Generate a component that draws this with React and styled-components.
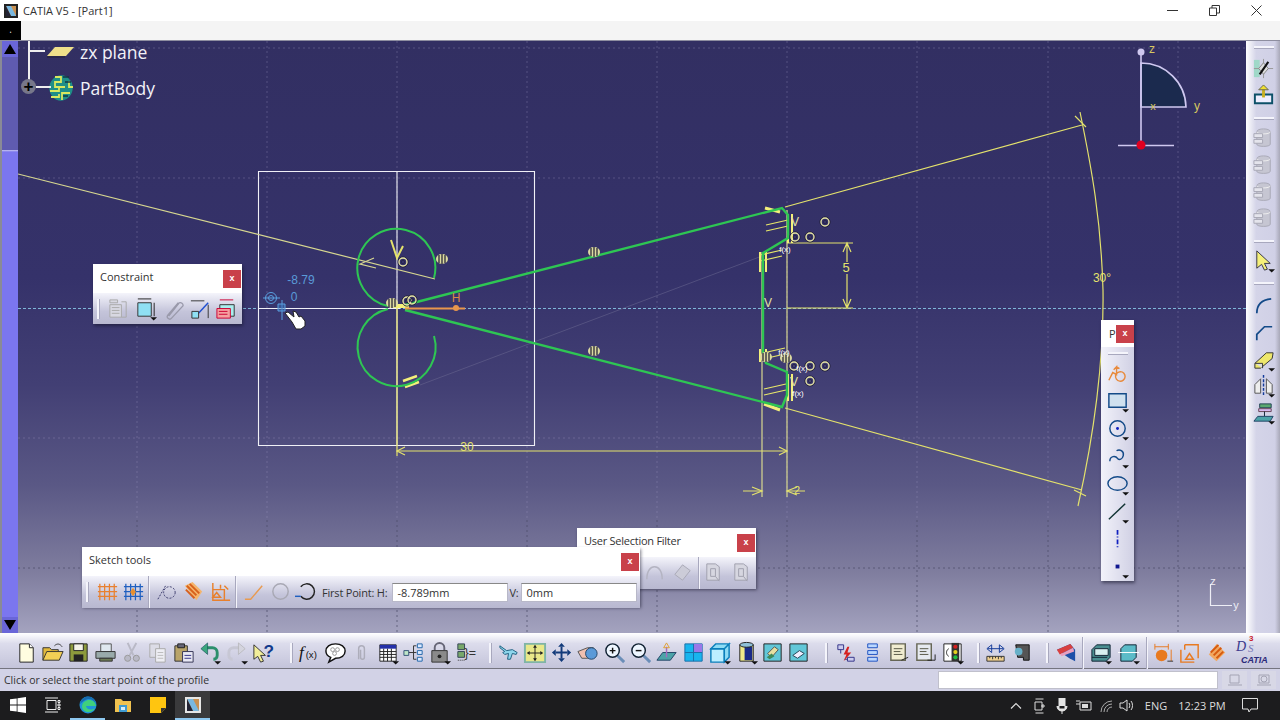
import React from 'react';
import styled, { createGlobalStyle } from 'styled-components';

const GlobalStyle = createGlobalStyle`
    html, body { margin: 0; padding: 0; background: #1c1c1e; }
    body { font-family: 'Open Sans', 'Liberation Sans', sans-serif; overflow: hidden; }
`

const arrow = <path d="M17 21h7l-3.500 3.500z" fill="#111" />

// 24x24 drawings for the toolbar buttons
const icons = {
    newDoc: <><path d="M5 3h10l4 4v15H5z" fill="#fffde0" stroke="#222" /><path d="M15 3v4h4" fill="#fff" stroke="#222" /></>,
    open: <><path d="M2 20V7h7l2 2h7v3" fill="#e2b93c" stroke="#333" /><path d="M2 20l4-9h17l-4 9z" fill="#f3cf55" stroke="#333" /><path d="M14 5c3-3 6-2 8 1" fill="none" stroke="#333" /></>,
    save: <><path d="M3 3h18v18H3z" fill="#8c9a3c" stroke="#222" /><path d="M7 3h10v7H7z" fill="#f4f4e8" stroke="#222" /><path d="M7 14h10v7H7z" fill="#222" /></>,
    print: <><path d="M7 3h11v8H7z" fill="#dfe8ef" stroke="#555" /><path d="M2 11h20v7H2z" fill="#9aa" stroke="#333" /><path d="M6 18h13v3H6z" fill="#6d7a55" stroke="#333" /></>,
    cut: <><path d="M8 2l6 13M17 2l-7 13" stroke="#b9b9c6" strokeWidth="2" /><circle cx="8" cy="18" r="3.200" fill="#b9b9c6" stroke="#999" /><circle cx="17" cy="18" r="3.200" fill="#b9b9c6" stroke="#999" /></>,
    copy: <><path d="M4 3h10v14H4z" fill="#dcdce6" stroke="#aaa" /><path d="M10 8h10v14H10z" fill="#eeeef4" stroke="#aaa" /><path d="M12 12h6M12 15h6M12 18h6" stroke="#bbb" /></>,
    paste: <><path d="M3 5h13v16H3z" fill="#b9a46a" stroke="#333" /><path d="M6 3h7v4H6z" fill="#667" stroke="#222" /><path d="M11 11h11v11H11z" fill="#e8e8f4" stroke="#335" /><path d="M13 15h7M13 18h7" stroke="#338" /></>,
    undo: <><path d="M8 7h7a5 5 0 0 1 5 5v3a4 4 0 0 1-4 4" fill="none" stroke="#2b8f6c" strokeWidth="3" /><path d="M10 2L3 8l7 6z" fill="#3aa77e" stroke="#145" strokeWidth=".6" />{arrow}</>,
    redo: <><path d="M16 7H9a5 5 0 0 0-5 5v3a4 4 0 0 0 4 4" fill="none" stroke="#c7c7d4" strokeWidth="3" /><path d="M14 2l7 6-7 6z" fill="#d4d4de" stroke="#aaa" strokeWidth=".6" />{arrow}</>,
    help: <><path d="M3 4v15l4-3 3 6 3-1-3-6h5z" fill="#f2ee9a" stroke="#333" /><text x="13" y="17" fontSize="18" fontWeight="700" fill="#123a8c" fontFamily="Liberation Sans, sans-serif">?</text></>,
    fx: <><text x="1" y="18" fontSize="18" fontStyle="italic" fill="#111" fontFamily="Liberation Serif, serif">f</text><text x="8" y="18" fontSize="10" fill="#111" fontFamily="Liberation Sans, sans-serif">(x)</text></>,
    comment: <><path d="M12 3c6 0 10 3 10 7.500S18 18 12 18l-7 4 2-5c-3-1-5-3.500-5-6.500C2 6 6 3 12 3z" fill="#fff" stroke="#111" strokeWidth="1.500" /><circle cx="9" cy="9" r="2" fill="none" stroke="#999" /><circle cx="14" cy="9" r="2" fill="none" stroke="#999" /><circle cx="11" cy="13" r="2" fill="none" stroke="#999" /></>,
    clip: <path d="M9 19V8a3 3 0 0 1 6 0v9a2 2 0 0 1-4 0V9" fill="none" stroke="#adadba" strokeWidth="1.500" />,
    table: <><path d="M4 4h17v17H4z" fill="#fff" stroke="#222" /><path d="M4 4h17v4H4z" fill="#2430a8" /><path d="M8 8v13M12 8v13M16 8v13M4 11h17M4 14h17M4 17h17" stroke="#222" />{arrow}</>,
    tree: <><path d="M5 12h7M12 5v14M12 5h3M12 19h3M12 12h3" stroke="#333" fill="none" /><path d="M2 10h5v5H2z" fill="#bfe6c8" stroke="#357" /><path d="M16 3h5v4h-5zM16 10h5v4h-5zM16 17h5v4h-5z" fill="#dbe9ff" stroke="#26a" /></>,
    lock: <><path d="M7 10V7a5 5 0 0 1 10 0v3" fill="none" stroke="#667" strokeWidth="2" /><path d="M4 10h16v12H4z" fill="#8a8a8a" stroke="#333" /><circle cx="12" cy="16" r="2" fill="#222" />{arrow}</>,
    formula: <><path d="M4 3h7v6H4zM4 11h7v6H4z" fill="#78a86a" stroke="#345" /><path d="M4 20h7" stroke="#333" strokeDasharray="1 1" /><text x="11" y="17" fontSize="13" fill="#333" fontFamily="Liberation Sans, sans-serif">{'}='}</text></>,
    plane: <path d="M3 5l7 5 6-1 5 3-1 2-4-1-2 6h-3l1-6-4 1-2-2 2-1-5-4z" fill="#8ed6ec" stroke="#1d5f80" />,
    fit: <><path d="M2 3h21v19H2z" fill="#e9e88a" stroke="#7fb4a6" strokeWidth="2" /><path d="M12.500 5v15M5 12.500h15" stroke="#222" /><path d="M12.500 4l-2 3h4zM12.500 21l-2-3h4zM4 12.500l3-2v4zM21 12.500l-3-2v4z" fill="#222" /></>,
    pan: <><path d="M12 6v12M6 12h12" stroke="#123a7a" strokeWidth="2" /><path d="M12 2l-3.500 4h7zM12 22l-3.500-4h7zM2 12l4-3.500v7zM22 12l-4-3.500v7z" fill="#123a7a" /></>,
    rotate: <><path d="M2 11l10-4h6v7l-6 4H6z" fill="#f0c0b0" stroke="#555" /><circle cx="16" cy="13" r="6" fill="#5b9ad8" stroke="#246" /></>,
    zoomIn: <><path d="M15 15l7 7" stroke="#6b8eb8" strokeWidth="3" /><circle cx="10" cy="10" r="7" fill="#eef6ff" stroke="#123" strokeWidth="1.500" /><path d="M7 10h6M10 7v6" stroke="#111" strokeWidth="1.500" /></>,
    zoomOut: <><path d="M15 15l7 7" stroke="#6b8eb8" strokeWidth="3" /><circle cx="10" cy="10" r="7" fill="#eef6ff" stroke="#123" strokeWidth="1.500" /><path d="M7 10h6" stroke="#111" strokeWidth="1.500" /></>,
    normal: <><path d="M2 20l6-8h14l-6 8z" fill="#4ca3a8" stroke="#246" /><path d="M12 17V6" stroke="#a56cc1" strokeWidth="1.500" /><path d="M12 2l-3 5h6z" fill="none" stroke="#e0a030" /></>,
    views: <><path d="M3 3h18v18H3z" fill="#18b5ee" stroke="#1a6fa8" /><path d="M12 3h9v9h-9z" fill="#9a78e8" /><path d="M12 3v18M3 12h18" stroke="#1a6fa8" /></>,
    cube: <><path d="M3 8h14v14H3z" fill="#bdefff" stroke="#0a7fbb" strokeWidth="1.500" /><path d="M3 8l5-5h14l-5 5zM17 8l5-5v14l-5 5z" fill="#8edcf5" stroke="#0a7fbb" strokeWidth="1.500" />{arrow}</>,
    cyl: <><path d="M5 4h14v17H5z" fill="#efe98a" stroke="#222" /><path d="M10 6h8v14h-8z" fill="#1a2a88" /><ellipse cx="12" cy="4" rx="7" ry="2.500" fill="#8fc0d8" stroke="#222" />{arrow}</>,
    shade1: <><path d="M3 3h18v18H3z" fill="#62c7d8" stroke="#222" /><path d="M7 13l7-7 4 3-7 8z" fill="#e8e0a0" stroke="#555" /><path d="M6 17l5-4 3 3-5 3z" fill="#3e8a5a" /></>,
    shade2: <><path d="M3 3h18v18H3z" fill="#62c7d8" stroke="#222" /><path d="M6 15l7-5 5 3-7 5z" fill="#eef" stroke="#245" /></>,
    con1: <><path d="M4 4h6v5H4zM14 17h7v4h-7z" fill="#cce" stroke="#338" /><path d="M7 9v4M14 19h-3" stroke="#338" /><path d="M14 6l-4 8h3l-3 7 8-9h-4l2-6z" fill="#d62020" /></>,
    con2: <path d="M7 3h10v4H7zM7 10h10v4H7zM7 17h10v4H7z" fill="#bcd8ff" stroke="#1d50c0" />,
    list1: <><path d="M3 3h15v17H3z" fill="#f0ecd0" stroke="#665" strokeWidth="1.500" /><path d="M6 8h9M6 11h7M6 14h9" stroke="#554" /><path d="M14 20l7-3" stroke="#222" /></>,
    list2: <><path d="M3 3h15v17H3z" fill="#e6eaf0" stroke="#665" strokeWidth="1.500" /><path d="M6 8h9M6 11h7M6 14h9" stroke="#554" /><path d="M14 20h8v-6" fill="none" stroke="#222" /></>,
    lights: <><path d="M3 3h18v18H3z" fill="#fff" stroke="#222" /><path d="M11 2h8v19h-8z" fill="#333" /><circle cx="15" cy="6" r="2.200" fill="#d62020" /><circle cx="15" cy="11.500" r="2.200" fill="#e6d020" /><circle cx="15" cy="17" r="2.200" fill="#20c040" /><path d="M8 8c-3 2-3 6 0 8" fill="none" stroke="#222" />{arrow}</>,
    measure: <><path d="M3 16h18v5H3z" fill="#f0d090" stroke="#333" /><path d="M6 16v2M9 16v3M12 16v2M15 16v3M18 16v2" stroke="#333" /><path d="M4 8h16" stroke="#123a9a" /><path d="M3 8l5-4v8zM21 8l-5-4v8z" fill="none" stroke="#123a9a" /></>,
    inertia: <><path d="M6 4h14v16h-6v-3h-6z" fill="#555" stroke="#111" /><circle cx="9" cy="11" r="4" fill="#67b0c8" /></>,
    rainbow: <><path d="M3 9l14-6 5 6v12l-6-3z" fill="#1d50a8" /><path d="M3 9l14-6 3 4-14 7z" fill="#d84040" /><path d="M6 14l14-7 1 4-13 5z" fill="#e8a0c0" /></>,
    solid1: <><path d="M3 9l5-5h14v13l-4 4H3z" fill="#4a8e90" stroke="#123" /><path d="M6 8h14v7H6z" fill="#d8f0f0" stroke="#123" /><path d="M3 17h16" stroke="#123" />{arrow}</>,
    solid2: <><path d="M4 8l4-4h12v13l-4 4H4z" fill="#5bbbc8" stroke="#123" /><path d="M1 12h22" stroke="#fff" />{arrow}</>,
    orange1: <><path d="M3 3v6M17 3v6M3 6h14M20 9v12" stroke="#e87a20" fill="none" /><circle cx="10" cy="15" r="6" fill="#e87a20" /><path d="M16 21h6" stroke="#333" /></>,
    orange2: <path d="M7 4h14v14M3 9v13h14M7 4v5M12 13l-4 6h8zM3 22h6" fill="none" stroke="#e87a20" strokeWidth="1.500" />,
    orange3: <><path d="M4 14l8-11 9 9-9 9z" fill="#f2a860" /><path d="M6 12l8-8M9 15l8-8M12 18l7-7" stroke="#d65a10" strokeWidth="2" /></>,
    gridOrange: <path d="M4 4v17M9 4v17M14 4v17M19 4v17M2 7h20M2 12h20M2 17h20" stroke="#e88030" strokeWidth="1.300" />,
    gridBlue: <><path d="M4 4v17M9 4v17M14 4v17M19 4v17M2 7h20M2 12h20M2 17h20" stroke="#2060c0" strokeWidth="1.300" /><path d="M11.500 8l3 4.500-3 4.500-3-4.500z" fill="#e89030" /></>,
    construct: <><path d="M3 20L11 6" stroke="#336" strokeDasharray="2 1.500" /><circle cx="15" cy="13" r="6" fill="none" stroke="#336" strokeDasharray="2 1.500" /></>,
    hatchOrange: <><path d="M3 6l8-4 10 10-6 9z" fill="#f4b46c" /><path d="M5 6l10 10M8 4l10 10M4 10l9 9" stroke="#d8601c" strokeWidth="2" /></>,
    dims: <path d="M4 3v18h18M4 10h12v11M12 5v4M8 13l4 5h-8zM16 6l4 4" fill="none" stroke="#e8802c" strokeWidth="1.500" />,
    lineOrange: <path d="M2 20h6L20 6" fill="none" stroke="#e89a50" strokeWidth="1.500" />,
    circleGrey: <circle cx="12" cy="12" r="8" fill="none" stroke="#a8a8b4" strokeWidth="1.500" />,
    arcBlue: <><path d="M6 7a8 8 0 1 1 0 10" fill="none" stroke="#222" strokeWidth="1.500" /><path d="M0 17h6" stroke="#2060c0" strokeWidth="1.500" /></>,
    conDisabled: <><path d="M3 3h8v3H3zM3 8h12v13H3z" fill="#d8d8e2" stroke="#aaa" /><path d="M15 5h5v16h-5M5 11h8M5 14h8M5 17h8" stroke="#aaa" fill="none" /></>,
    conBox: <><path d="M4 6h14v14H4z" fill="#8fe0f4" stroke="#333" /><path d="M4 2h14M21 6v14" stroke="#222" />{arrow}</>,
    clipBig: <path d="M7 20L18 6a3 3 0 0 1 4 3L10 22a2.500 2.500 0 0 1-4-3L17 6" fill="none" stroke="#99a" strokeWidth="1.300" />,
    conArrow: <><path d="M2 4h14M20 8v14" stroke="#333" /><path d="M7 20L20 6" stroke="#2050d0" strokeWidth="1.500" /><path d="M3 15h7v7H3z" fill="#8fe0f4" stroke="#333" /></>,
    conRed: <><path d="M5 8h15v12H5z" fill="#aee" stroke="#333" /><path d="M2 12h14v10H2z" fill="#f4a0a0" stroke="#c03" /><path d="M4 15h9M4 18h9" stroke="#c03" /><path d="M5 3h14" stroke="#c03" /></>,
    arcA: <path d="M5 20c0-9 5-14 15-15" fill="none" stroke="#134a88" strokeWidth="1.800" />,
    arcB: <path d="M5 20v-6l8-8h8" fill="none" stroke="#134a88" strokeWidth="1.800" />,
    surf: <path d="M4 19c0-9 4-13 8-13s8 4 8 13" fill="none" stroke="#b4b4c2" strokeWidth="1.500" />,
    solidGrey: <path d="M4 14l8-10 8 6-8 10z" fill="#ccccd8" stroke="#a8a8b6" />,
    filterGrey: <><path d="M5 3h9l4 3v14H5z" fill="#d6d6e0" stroke="#a0a0ae" /><path d="M9 8h5v8H9zM14 16l4 5" stroke="#a0a0ae" fill="none" /></>,
    compass: <><path d="M2 3h6v18H2z" fill="#9fd8c8" /><path d="M12 2v20M2 12h20" stroke="#999" /><path d="M12 6l5 6-5 6-5-6z" fill="#ddd" stroke="#888" /><path d="M8 18L17 5" stroke="#111" strokeWidth="2.200" /></>,
    exitSketch: <><path d="M3 11h18v9H3z" fill="#eef" stroke="#0c5068" strokeWidth="2" /><path d="M12 14V4" stroke="#c8b020" strokeWidth="3" /><path d="M12 1l-5 5h10z" fill="#f0e030" stroke="#665" /></>,
    part: <><path d="M5 6c0-4 14-4 14 0v13c0 3-14 3-14 0z" fill="#c6c6d2" stroke="#a8a8b6" /><path d="M5 6c0 3 14 3 14 0" fill="none" stroke="#eee" /><path d="M2 8h9v4H2zM2 14h9v4H2z" fill="#e4e4ec" stroke="#a8a8b6" /></>,
    pointer: <><path d="M5 2v18l5-4 3 6 3-1-3-6h6z" fill="#f5f07a" stroke="#334" />{arrow}</>,
    eraser: <><path d="M3 16L15 5h7l-1 6-12 10H3z" fill="#eee76c" stroke="#333" /><path d="M3 16h8v5" stroke="#333" fill="#ddd" />{arrow}</>,
    mirror: <><path d="M12 1v22" stroke="#123a9a" strokeWidth="1.500" strokeDasharray="3 1.500" /><path d="M9 5L3 11v9h6zM15 5l6 6v9h-6z" fill="#eee" stroke="#555" />{arrow}</>,
    pad: <><path d="M8 3h12v4H8z" fill="#5ba870" stroke="#245" /><path d="M7 8h13v3H7z" fill="#d8b8f0" stroke="#645" /><path d="M13 11v5" stroke="#123" /><path d="M2 21l4-5h16l-3 5z" fill="#4ca3a8" stroke="#246" />{arrow}</>,
    profile: <path d="M3 19l4-8 4 2V5l-3 3M14 7l-3-2M10 14a5 5 0 1 0 5-4 6 6 0 0 0-5 4" fill="none" stroke="#e88a3c" strokeWidth="1.500" />,
    rectangle: <><path d="M3 5h18v14H3z" fill="#cfe0ef" stroke="#134a88" strokeWidth="1.500" />{arrow}</>,
    circle: <><circle cx="12" cy="12" r="8" fill="none" stroke="#134a88" strokeWidth="1.500" /><circle cx="12" cy="12" r="1.500" fill="#1020c0" />{arrow}</>,
    spline: <><path d="M4 17c0-6 6-6 8-3 2 2 5 1 6-3 1-5-4-7-7-5" fill="none" stroke="#134a88" strokeWidth="1.500" />{arrow}</>,
    ellipse: <><ellipse cx="12" cy="12" rx="10" ry="7" fill="none" stroke="#134a88" strokeWidth="1.500" />{arrow}</>,
    line: <><path d="M3 20L20 4" stroke="#133" strokeWidth="1.500" />{arrow}</>,
    axis: <path d="M12 3v18" stroke="#1020c0" strokeWidth="1.800" strokeDasharray="5 2 1 2" />,
    point: <><path d="M10 10h4v4h-4z" fill="#101890" />{arrow}</>,
}

const bottomGroups = [
    { slot: 26.2, start: 14, after: 0, items: ['newDoc', 'open', 'save', 'print', 'cut', 'copy', 'paste', 'undo', 'redo', 'help'] },
    { slot: 26, start: 11, after: 2, items: ['fx', 'comment', 'clip', 'table', 'tree', 'lock', 'formula'] },
    { slot: 26.4, start: 7, after: 2, items: ['plane', 'fit', 'pan', 'rotate', 'zoomIn', 'zoomOut', 'normal', 'views', 'cube', 'cyl', 'shade1', 'shade2'] },
    { slot: 26.8, start: 9, after: 3, items: ['con1', 'con2', 'list1', 'list2', 'lights'] },
    { slot: 26, start: 7, after: 1, items: ['measure', 'inertia'] },
    { slot: 26, start: 8, after: 2, items: ['rainbow'] },
]

const rightItems = [
    { grip: 8 }, { icon: 'compass' }, { icon: 'exitSketch' },
    { grip: 6 }, { icon: 'part' }, { icon: 'part' }, { icon: 'part' }, { icon: 'part' },
    { grip: 6 }, { icon: 'pointer' },
    { grip: 9 }, { icon: 'arcA' }, { icon: 'arcB' }, { icon: 'eraser' }, { icon: 'mirror' }, { icon: 'pad' },
]

const profileItems = ['profile', 'rectangle', 'circle', 'spline', 'ellipse', 'line', 'axis', 'point']

const Glyph = ({ name, size = 24 }) => (
    <svg width={size} height={size} viewBox="0 0 25 25">{icons[name]}</svg>
)

const Tool = ({ name, slot = 26 }) => (
    <ToolSlot $w={slot}><Glyph name={name} /></ToolSlot>
)

function FloatBar({ title, left, top, width, height, tight, children }) {
    return (
        <Floating $left={left} $top={top} $w={width} $h={height}>
            <FloatTitle $tight={tight}>
                <span>{title}</span>
                <CloseBox>x</CloseBox>
            </FloatTitle>
            <FloatBody>{children}</FloatBody>
        </Floating>
    )
}

const Ticks = ({ x, y }) => (
    <path d={`M${x - 12} ${y - 3}l22 -5M${x - 12} ${y + 3}l22 -5`} stroke="#e8e86a" strokeWidth="1.200" fill="none" />
)

// "ring" constraint mark, dark halo with a pale ring
const Concentric = ({ x, y }) => (
    <g fill="none">
        <circle cx={x} cy={y} r="5" stroke="#1c1a30" strokeWidth="1" />
        <circle cx={x} cy={y} r="4" stroke="#e4e2a4" strokeWidth="1.400" />
        <circle cx={x} cy={y} r="1.800" stroke="#26244a" strokeWidth="1" />
    </g>
)

const Sym = ({ x, y }) => (
    <g>
        <ellipse cx={x} cy={y} rx="6" ry="5" fill="#dcdaa0" />
        <path d={`M${x - 3} ${y - 4}v8M${x} ${y - 5}v10M${x + 3} ${y - 4}v8`} stroke="#1c1a30" strokeWidth="1.200" />
    </g>
)

function SketchCanvas() {
    const gridX = [137, 267, 397, 527, 657, 787, 917, 1048, 1178]
    const gridY = [48, 178, 438]
    const symbols = [[442, 259], [594, 252], [594, 351], [392, 303], [786, 358], [766, 357]]
    const rings = [[403, 262], [407, 301], [412, 300], [825, 222], [795, 237], [810, 237], [794, 366], [810, 366], [825, 366], [810, 381]]
    const fx = [[785, 252], [784, 355], [802, 371], [798, 396]]
    return (
        <Sketch viewBox="18 41 1228 592">
            <g stroke="#a5a3c6" strokeOpacity=".3" strokeDasharray="2 3">
                {gridX.map(x => <path key={x} d={`M${x} 41V520`} />)}
                {gridY.map(y => <path key={y} d={`M18 ${y}H1246`} />)}
            </g>
            <g stroke="#4c4a66" strokeOpacity=".7" strokeDasharray="2 3">
                {gridX.map(x => <path key={x} d={`M${x} 520V633`} />)}
                <path d="M18 568H1246" />
            </g>
            <path d="M18 308.500H1246" stroke="#7fb6d8" strokeDasharray="3 2" />
            <path d="M420 385L762 256" stroke="#6e6c94" strokeOpacity=".5" fill="none" />
            <path d="M258.500 171.500H534.500V445.500H258.500ZM397 171V446M258 308.500H400" fill="none" stroke="#f0f0f6" strokeWidth="1.100" />

            <g fill="none" stroke="#d8d890" strokeWidth="1.200">
                <path d="M18 174L435 279" />
                <path d="M785 207L1082 125M785 408L1082 490" stroke="#e4e26c" />
                <path d="M1080 112C1092 170 1101 220 1103 290C1104 360 1095 430 1078 506" stroke="#e4e26c" />
                <path d="M1075 116L1086 127M1074 490L1086 496" stroke="#e4e26c" />
                <path d="M762 252V497M787 210V497" stroke="#d8d890" />
                <path d="M397 308V456M397 451H787M787 243H853M787 308H853M743 491H762M787 491H805" stroke="#e4e26c" />
                <path d="M405 447L397 451L405 455M779 447L787 451L779 455M752 487L762 491L752 495M797 487L787 491L797 495" stroke="#e4e26c" />
                <path d="M843 252L847 243L851 252M843 299L847 308L851 299M847 243V262M847 274V308" stroke="#e4e26c" />
                <path d="M374 258L360 264L376 268" stroke="#d8d890" />
                <path d="M391 240L397 258L403 246" stroke="#e4e26c" strokeWidth="2" />
                <path d="M390 306H409" stroke="#f4f07a" strokeWidth="4" />
                <path d="M403 381L417 376M405 387L419 382" stroke="#f4f07a" strokeWidth="2.400" />
                <path d="M765 208L780 212M764 404L780 410" stroke="#f4f07a" strokeWidth="3" />
                <path d="M760 252V272M766 252V272M760 349V362M766 349V362" stroke="#f4f07a" strokeWidth="2" />
                <path d="M788 214V243M792 214V243M788 374V401M792 374V401" stroke="#f4f07a" strokeWidth="2" />
            </g>
            <Ticks x={778} y={228} />
            <Ticks x={772} y={258} />
            <Ticks x={775} y={356} />
            <Ticks x={776} y={392} />

            <g fill="none" stroke="#2ec653" strokeWidth="2">
                <path d="M434 278A39 39 0 1 0 388 306" />
                <path d="M434 336A39 39 0 1 1 388 309" />
            </g>
            <path d="M405 305L782 208L788 215V238L763 253V355L766 363L787 372V395L782 407L405 310" fill="none" stroke="#2ec653" strokeWidth="2.400" />
            <path d="M405 308.500H465" stroke="#e8964c" strokeWidth="2" />
            <circle cx="456" cy="308" r="3" fill="#e8964c" />
            <Label x="456" y="302" $c="#d88a46" $s="12">H</Label>

            {symbols.map(([x, y]) => <Sym key={`${x}-${y}`} x={x} y={y} />)}
            {rings.map(([x, y]) => <Concentric key={`${x}-${y}`} x={x} y={y} />)}
            {fx.map(([x, y]) => <Label key={`${x}-${y}`} x={x} y={y} $c="#fff" $s="8">f(x)</Label>)}

            <Label x="467" y="451" $c="#e4e26c" $s="12">30</Label>
            <Label x="846" y="272" $c="#e4e26c" $s="13">5</Label>
            <Label x="797" y="494" $c="#e4e26c" $s="11">2</Label>
            <Label x="768" y="307" $c="#e4e2a4" $s="12">V</Label>
            <Label x="795" y="226" $c="#e4e2a4" $s="12">V</Label>
            <Label x="794" y="386" $c="#e4e2a4" $s="12">V</Label>
            <Label x="1102" y="282" $c="#e4e26c" $s="12">30°</Label>
            <Label x="301" y="284" $c="#5a9ad8" $s="12">-8.79</Label>
            <Label x="294" y="301" $c="#5a9ad8" $s="12">0</Label>

            <g fill="none" stroke="#5aa0e0">
                <circle cx="271" cy="298" r="5.500" />
                <circle cx="271" cy="298" r="2.500" />
                <path d="M263 298H280M282 300V320" />
                <path d="M278 304h7v7h-7z" fill="#3a78c0" fillOpacity=".5" />
            </g>
            <path d="M285 313l3-1 6 5-1-6 3 1 3 5 2-1 4 5v5l-4 3h-5l-4-7z" fill="#fff" stroke="#222" />

            <path d="M1141 63A45 45 0 0 1 1186 107H1141Z" fill="#1b2a4e" stroke="#cfc8f0" strokeWidth="1.600" />
            <path d="M1141 52V145M1118 145.500H1174" stroke="#cfc8f0" strokeWidth="1.600" fill="none" />
            <circle cx="1141" cy="52" r="3.500" fill="#cfc8f0" />
            <circle cx="1141" cy="145" r="4.500" fill="#e00020" />
            <Label x="1152" y="53" $c="#d8c860" $s="12">z</Label>
            <Label x="1197" y="110" $c="#d8c860" $s="12">y</Label>
            <Label x="1153" y="110" $c="#d8c860" $s="11">x</Label>

            <path d="M1210.500 584V605.500H1232" fill="none" stroke="#eeeef6" strokeWidth="1.200" />
            <Label x="1213" y="585" $c="#eeeef6" $s="11">z</Label>
            <Label x="1236" y="609" $c="#eeeef6" $s="11">y</Label>
        </Sketch>
    )
}

export default function App() {
    return (
        <Screen>
            <GlobalStyle />
            <TitleBar>
                <AppIcon width="14" height="14" viewBox="0 0 14 14">
                    <path d="M0 0h14v14H0z" fill="#222" />
                    <path d="M2 2h10v10H2z" fill="#c89050" />
                    <path d="M2 2h5l5 10H7z" fill="#79b8e0" />
                    <path d="M2 2l5 10H2z" fill="#223" />
                </AppIcon>
                <TitleText>CATIA V5 - [Part1]</TitleText>
                <WindowButtons>
                    <svg width="11" height="11" viewBox="0 0 11 11"><path d="M0 5.500h11" stroke="#333" /></svg>
                    <svg width="11" height="11" viewBox="0 0 11 11"><path d="M.5 3h7v7.500h-7zM3 3V.5h7.500V8H8" fill="none" stroke="#333" /></svg>
                    <svg width="11" height="11" viewBox="0 0 11 11"><path d="M.5.500l10 10M10.500.500l-10 10" stroke="#333" /></svg>
                </WindowButtons>
            </TitleBar>
            <MenuBar><MenuCorner>.</MenuCorner></MenuBar>

            <Workspace>
                <ScrollStrip>
                    <ScrollButton>
                        <svg width="12" height="10" viewBox="0 0 12 10"><path d="M6 0l6 10H0z" fill="#000" /></svg>
                    </ScrollButton>
                    <ScrollThumb />
                    <ScrollButton>
                        <svg width="12" height="10" viewBox="0 0 12 10"><path d="M6 10l6-10H0z" fill="#000" /></svg>
                    </ScrollButton>
                </ScrollStrip>

                <Viewport>
                    <SketchCanvas />
                    <Tree>
                        <TreeRow>
                            <svg width="28" height="12" viewBox="0 0 28 12"><path d="M8 1h19l-8 9H0z" fill="#efe08a" /><path d="M0 11h18" stroke="#223" /></svg>
                            <TreeLabel>zx plane</TreeLabel>
                        </TreeRow>
                        <TreeRow>
                            <svg width="28" height="28" viewBox="0 0 28 28">
                                <path d="M6 5c4-5 13-5 16 0 5 4 5 13 0 18-5 5-12 5-16 0-5-5-5-13 0-18z" fill="#1f8f88" />
                                <path d="M8 3h6v5H8v5h10M22 7v6h4M3 17h9v-4M4 23h8v-3M15 26v-7h8" fill="none" stroke="#d8e860" strokeWidth="1.800" />
                                <path d="M16 3h6M18 8h6M16 22h5" stroke="#123a44" strokeWidth="1.600" />
                            </svg>
                            <TreeLabel>PartBody</TreeLabel>
                        </TreeRow>
                        <TreeStem />
                        <TreeBranch />
                        <TreeBranchLow />
                        <TreeNode>+</TreeNode>
                    </Tree>

                    <FloatBar title="Constraint" left={75} top={223} width={149} height={60}>
                        <Grip />
                        <BodyPad $w={3} />
                        <Tool name="conDisabled" slot={27} />
                        <Tool name="conBox" slot={28} />
                        <Tool name="clipBig" slot={28} />
                        <Tool name="conArrow" slot={26} />
                        <Tool name="conRed" slot={25} />
                    </FloatBar>

                    <FloatBar title="User Selection Filter" left={559} top={487} width={179} height={60} tight>
                        <BodyPad $w={63} />
                        <Tool name="surf" slot={28} />
                        <Tool name="solidGrey" slot={28} />
                        <BodyPad $w={2} />
                        <Divider />
                        <Tool name="filterGrey" slot={28} />
                        <Tool name="filterGrey" slot={27} />
                    </FloatBar>

                    <FloatBar title="Sketch tools" left={64} top={506} width={558} height={59}>
                        <Grip />
                        <BodyPad $w={4} />
                        <Tool name="gridOrange" slot={26} />
                        <Tool name="gridBlue" slot={26} />
                        <BodyPad $w={2} />
                        <Divider />
                        <BodyPad $w={3.500} />
                        <Tool name="construct" slot={27} />
                        <Tool name="hatchOrange" slot={27} />
                        <Tool name="dims" slot={27} />
                        <BodyPad $w={1.500} />
                        <Divider />
                        <BodyPad $w={5} />
                        <Tool name="lineOrange" slot={26} />
                        <Tool name="circleGrey" slot={26} />
                        <Tool name="arcBlue" slot={25} />
                        <FieldLabel>First Point: H:</FieldLabel>
                        <FieldInput value="-8.789mm" readOnly />
                        <FieldLabel $tight>V:</FieldLabel>
                        <FieldInput value="0mm" readOnly />
                    </FloatBar>

                    <ProfileBar>
                        <ProfileTitle>
                            <span>P</span>
                            <CloseBox>x</CloseBox>
                        </ProfileTitle>
                        <HGrip $before={5} $after={6} />
                        {profileItems.map(name => <VTool key={name}><Glyph name={name} /></VTool>)}
                    </ProfileBar>
                </Viewport>

                <RightToolbar>
                    {rightItems.map((item, i) =>
                        item.grip
                            ? <HGrip key={i} $before={i === 0 ? 3 : 8} $after={item.grip} />
                            : <VTool key={i}><Glyph name={item.icon} /></VTool>
                    )}
                </RightToolbar>
            </Workspace>

            <BottomToolbar>
                {bottomGroups.map((group, i) => (
                    <ToolGroup key={i} $start={group.start}>
                        {i > 0 && <Grip />}
                        <BodyPad $w={group.after} />
                        {group.items.map(name => <Tool key={name} name={name} slot={group.slot} />)}
                    </ToolGroup>
                ))}
                <ToolGroup $start={4}>
                    <Divider />
                    <BodyPad $w={3} />
                    <Tool name="solid1" slot={28} />
                    <Tool name="solid2" slot={28} />
                    <BodyPad $w={4} />
                    <Divider />
                    <BodyPad $w={3} />
                    <Tool name="orange1" slot={26.500} />
                    <Tool name="orange2" slot={26.500} />
                    <Tool name="orange3" slot={26.500} />
                </ToolGroup>
                <Logo>
                    <svg width="40" height="32" viewBox="0 0 40 32">
                        <text x="15" y="7" fontSize="8" fontWeight="700" fill="#c8202c" fontFamily="Liberation Sans, sans-serif">3</text>
                        <text x="2" y="17" fontSize="14" fontStyle="italic" fill="#3a3a8c" fontFamily="Liberation Serif, serif">D</text>
                        <text x="14" y="18" fontSize="11" fontStyle="italic" fill="#7a7ab8" fontFamily="Liberation Serif, serif">S</text>
                        <text x="7" y="29" fontSize="9" fontWeight="700" fontStyle="italic" fill="#2c2a7a" fontFamily="Liberation Sans, sans-serif">CATIA</text>
                    </svg>
                </Logo>
            </BottomToolbar>

            <StatusBar>
                <StatusText>Click or select the start point of the profile</StatusText>
                <StatusInput />
                <StatusButton>
                    <svg width="16" height="14" viewBox="0 0 16 14"><path d="M3 2h9v8H3zM1 12h14" fill="none" stroke="#a4a4b4" /></svg>
                </StatusButton>
                <StatusButton>
                    <svg width="16" height="14" viewBox="0 0 16 14"><path d="M3 2h10v8H3zM1 12h14" fill="none" stroke="#a4a4b4" /><circle cx="8" cy="6" r="3" fill="none" stroke="#a4a4b4" /></svg>
                </StatusButton>
            </StatusBar>

            <Taskbar>
                <TaskSlot>
                    <svg width="16" height="16" viewBox="0 0 16 16"><path d="M0 2.300L6.700 1.400V7.600H0zM7.500 1.300L16 0V7.600H7.500zM0 8.400H6.700V14.600L0 13.700zM7.500 8.400H16V16L7.500 14.700z" fill="#fff" /></svg>
                </TaskSlot>
                <TaskSlot>
                    <svg width="16" height="16" viewBox="0 0 16 16"><path d="M2 3.500h9v9H2zM0 1h13M0 15h13M13 3.500h2v2h-2zM13 7h2v2h-2zM13 10.500h2v2h-2z" fill="none" stroke="#eee" /></svg>
                </TaskSlot>
                <TaskSlot $running>
                    <svg width="18" height="18" viewBox="0 0 18 18"><circle cx="9" cy="9" r="8.500" fill="#1f93d8" /><path d="M3 11c0-5 4-7 7-7 4 0 6 2 7 6H7c0 3 5 5 9 2-2 5-12 6-13-1z" fill="#3fd07c" /><path d="M1 8c1-5 5-7.500 8-7.500 4 0 7 3 8 7-2-3-5-5-8-4.500S3 6 1 8z" fill="#176bb0" /></svg>
                </TaskSlot>
                <TaskSlot>
                    <svg width="18" height="16" viewBox="0 0 18 16"><path d="M1 2h6l2 2h8v11H1z" fill="#f0c250" /><path d="M5 8h8v7H5z" fill="#3f9ad0" /><path d="M7 10h4v3H7z" fill="#d8eef8" /></svg>
                </TaskSlot>
                <TaskSlot>
                    <svg width="16" height="16" viewBox="0 0 16 16"><path d="M0 0h16v11l-5 5H0z" fill="#ffc510" /><path d="M11 11h5l-5 5z" fill="#333" /></svg>
                </TaskSlot>
                <TaskSlot $running $active>
                    <svg width="16" height="16" viewBox="0 0 16 16"><path d="M0 0h16v16H0z" fill="#e6e6e6" /><path d="M2 2h12v12H2z" fill="#c89050" /><path d="M2 2h6l6 12H8z" fill="#79b8e0" /><path d="M2 2l6 12H2z" fill="#223" /></svg>
                </TaskSlot>
                <Tray>
                    <TrayItem $w={23}><svg width="12" height="7" viewBox="0 0 12 7"><path d="M1 6.500l5-5 5 5" fill="none" stroke="#ddd" strokeWidth="1.200" /></svg></TrayItem>
                    <TrayItem $w={23}><svg width="11" height="16" viewBox="0 0 11 16"><path d="M1.500 1h8M1.500 15h8M1 4h7v8H1zM8 7h2v2H8z" fill="none" stroke="#ddd" /></svg></TrayItem>
                    <TrayItem $w={22}><svg width="12" height="16" viewBox="0 0 12 16"><path d="M3 0h6v11H3zM1 8c0 3 2 5 5 5s5-2 5-5M6 13v3" fill="#e4e4e4" stroke="#e4e4e4" /></svg></TrayItem>
                    <TrayItem $w={23}><svg width="16" height="11" viewBox="0 0 16 11"><path d="M4 2h11v8H4zM0 1h4M0 4h4" fill="none" stroke="#ddd" /><path d="M6 4h6v4H6z" fill="#ddd" /></svg></TrayItem>
                    <TrayItem $w={22}><svg width="14" height="12" viewBox="0 0 14 12"><path d="M1 12A11 11 0 0 1 12 1M4 12a8 8 0 0 1 8-8M7 12a5 5 0 0 1 5-5" fill="none" stroke="#aaa" /></svg></TrayItem>
                    <TrayItem $w={19.500}><svg width="16" height="13" viewBox="0 0 16 13"><path d="M1 4h3l4-3v11L4 9H1zM10 4c1 1 1 4 0 5M12 2c2 2 2 7 0 9" fill="none" stroke="#ddd" /></svg></TrayItem>
                    <TrayItem $w={38}>ENG</TrayItem>
                    <TrayItem $w={54}>12:23 PM</TrayItem>
                    <TrayItem $w={42}><svg width="16" height="15" viewBox="0 0 16 15"><path d="M.5.500h15V11H9l-2 3-1-3H.5z" fill="none" stroke="#ddd" /></svg></TrayItem>
                </Tray>
            </Taskbar>
        </Screen>
    )
}

const Screen = styled.div`
    width: 1280px;
    height: 720px;
    display: flex;
    flex-direction: column;
    overflow: hidden;
    background: #fff;
`

const TitleBar = styled.div`
    height: 21px;
    flex: none;
    display: flex;
    align-items: center;
    padding-left: 4px;
    background: #fff;
`

const AppIcon = styled.svg`
    flex: none;
`

const TitleText = styled.div`
    margin-left: 5px;
    font-size: 11px;
    color: #333;
    flex: 1;
`

const WindowButtons = styled.div`
    display: flex;
    align-items: center;
    gap: 31px;
    padding-right: 18px;
`

const MenuBar = styled.div`
    height: 19px;
    flex: none;
    background: #f4f4f4;
    border-bottom: 1px solid #8e8ea0;
`

const MenuCorner = styled.div`
    width: 21px;
    height: 19px;
    background: #000;
    color: #ddd;
    font-size: 10px;
    line-height: 16px;
    text-align: center;
`

const Workspace = styled.div`
    height: 592px;
    flex: none;
    display: flex;
`

const ScrollStrip = styled.div`
    width: 16px;
    flex: none;
    display: flex;
    flex-direction: column;
    border-left: 2px solid #8a8a96;
    background: #7b76ef;
`

const ScrollButton = styled.div`
    height: 16px;
    flex: none;
    display: flex;
    align-items: center;
    justify-content: center;
    background: #6a66d8;
`

const ScrollThumb = styled.div`
    flex: 1;
    background: linear-gradient(#5f5bb0 0, #5f5bb0 93px, #c8c6f0 93px, #7b76ef 95px);
`

const Viewport = styled.div`
    position: relative;
    flex: 1;
    overflow: hidden;
    background: linear-gradient(#322f62 0%, #35326a 40%, #423f74 58%, #5a5885 75%, #807e9f 90%, #a4a3bf 100%);
`

const Sketch = styled.svg`
    display: block;
    width: 1228px;
    height: 592px;
`

const Label = styled.text`
    font-family: 'Liberation Sans', sans-serif;
    fill: ${p => p.$c};
    font-size: ${p => p.$s}px;
    text-anchor: middle;
`

const Tree = styled.div`
    position: absolute;
    left: 0;
    top: 0;
    width: 160px;
    height: 62px;
`

const TreeRow = styled.div`
    display: flex;
    align-items: center;
    gap: 5px;
    height: 36px;
    padding-left: 29px;
    &:first-child { margin-top: -7px; }
`

const TreeLabel = styled.span`
    font-size: 17.500px;
    color: #f2f2f8;
`

const TreeStem = styled.div`
    position: absolute;
    left: 10px;
    top: 0;
    width: 2px;
    height: 40px;
    background: #eee;
`

const TreeBranch = styled.div`
    position: absolute;
    left: 10px;
    top: 9px;
    width: 17px;
    height: 2px;
    background: #eee;
`

const TreeBranchLow = styled(TreeBranch)`
    top: 45px;
    width: 15px;
    left: 18px;
`

const TreeNode = styled.div`
    position: absolute;
    left: 3px;
    top: 38px;
    width: 15px;
    height: 15px;
    border-radius: 50%;
    background: #77778a;
    color: #000;
    font: 700 17px/15px 'Liberation Sans', sans-serif;
    text-align: center;
`

const Floating = styled.div`
    position: absolute;
    left: ${p => p.$left}px;
    top: ${p => p.$top}px;
    width: ${p => p.$w}px;
    height: ${p => p.$h}px;
    display: flex;
    flex-direction: column;
    box-shadow: 1px 2px 3px rgba(20, 20, 40, .55);
`

const FloatTitle = styled.div`
    height: 29px;
    flex: none;
    display: flex;
    align-items: center;
    justify-content: space-between;
    padding: 0 1px 0 7px;
    background: #fff;
    font-size: 11px;
    color: #333;
    & > span {
        margin-top: -5px;
        letter-spacing: ${p => (p.$tight ? '-.25px' : '0')};
    }
`

const CloseBox = styled.div`
    width: 18px;
    height: 18px;
    flex: none;
    background: #c9414a;
    color: #fff;
    font: 700 9px/17px 'Liberation Sans', sans-serif;
    text-align: center;
`

const FloatBody = styled.div`
    flex: 1;
    display: flex;
    align-items: center;
    padding: 0 1px;
    background: linear-gradient(#f4f4fb, #c4c4da 60%, #b8b8d0);
`

const BodyPad = styled.div`
    width: ${p => p.$w}px;
    flex: none;
`

const ToolSlot = styled.div`
    width: ${p => p.$w}px;
    flex: none;
    display: flex;
    justify-content: center;
    align-items: center;
`

const Grip = styled.div`
    width: 2px;
    height: 20px;
    margin: 0 3px;
    flex: none;
    align-self: center;
    background: #f4f4fb;
    box-shadow: 1px 0 0 #a8a8be;
`

const HGrip = styled.div`
    width: 20px;
    height: 2px;
    margin: ${p => p.$before}px auto ${p => p.$after}px;
    flex: none;
    background: #f4f4fb;
    box-shadow: 0 1px 0 #a8a8be;
`

const Divider = styled.div`
    width: 1px;
    height: 32px;
    flex: none;
    background: #f4f4fb;
    box-shadow: -1px 0 0 #a8a8be;
`

const FieldLabel = styled.span`
    font-size: 11px;
    color: #333;
    white-space: nowrap;
    letter-spacing: -.2px;
    padding: ${p => (p.$tight ? '0 3px 0 1px' : '0 5px 0 3px')};
`

const FieldInput = styled.input`
    width: 116px;
    height: 19px;
    flex: none;
    box-sizing: border-box;
    border: 1px solid #b8b8c8;
    border-top-color: #888;
    padding: 0 4px;
    background: #fff;
    font: 11px 'Open Sans', sans-serif;
    color: #333;
`

const ProfileBar = styled.div`
    position: absolute;
    left: 1083px;
    top: 279px;
    width: 33px;
    height: 261px;
    display: flex;
    flex-direction: column;
    background: linear-gradient(90deg, #f2f2fa, #d0d0e4);
    box-shadow: 1px 2px 3px rgba(20, 20, 40, .55);
`

const ProfileTitle = styled.div`
    height: 27px;
    flex: none;
    display: flex;
    align-items: center;
    justify-content: space-between;
    padding-left: 8px;
    background: #fff;
    font-size: 11px;
    color: #333;
`

const VTool = styled.div`
    height: 27.600px;
    flex: none;
    display: flex;
    align-items: center;
    justify-content: center;
`

const RightToolbar = styled.div`
    width: 34px;
    flex: none;
    display: flex;
    flex-direction: column;
    padding: 2px 0 0 2px;
    box-sizing: border-box;
    background: linear-gradient(90deg, #fff, #d4d4e8 30%, #d0d0e6 85%, #a8a8b8);
    & > ${VTool} { height: 26.600px; }
`

const BottomToolbar = styled.div`
    height: 36px;
    flex: none;
    display: flex;
    align-items: center;
    padding-top: 5px;
    background: linear-gradient(#ffffff, #dcdcec 30%, #c4c4da);
    border-bottom: 1px solid #75757f;
    box-sizing: border-box;
`

const ToolGroup = styled.div`
    display: flex;
    align-items: center;
    height: 100%;
    padding-left: ${p => p.$start}px;
`

const Logo = styled.div`
    margin: -6px 0 0 4px;
    display: flex;
    width: 40px;
`

const StatusBar = styled.div`
    height: 22px;
    flex: none;
    display: flex;
    align-items: center;
    gap: 4px;
    padding-right: 4px;
    box-sizing: border-box;
    background: #d2d2e6;
`

const StatusText = styled.div`
    flex: 1;
    padding-left: 4px;
    font-size: 10.500px;
    color: #333;
`

const StatusInput = styled.div`
    width: 280px;
    height: 18px;
    background: #fff;
    border: 1px solid #c0c0cc;
    box-sizing: border-box;
`

const StatusButton = styled.div`
    width: 25px;
    height: 18px;
    display: flex;
    align-items: center;
    justify-content: center;
    background: #d8d8e6;
`

const Taskbar = styled.div`
    height: 29px;
    flex: none;
    display: flex;
    align-items: stretch;
    background: #1c1c1e;
    box-sizing: border-box;
`

const TaskSlot = styled.div`
    width: 35px;
    flex: none;
    display: flex;
    align-items: center;
    justify-content: center;
    box-sizing: border-box;
    background: ${p => (p.$active ? '#3a3a3c' : 'transparent')};
    border-bottom: 2px solid ${p => (p.$running ? '#8ec8f0' : 'transparent')};
`

const Tray = styled.div`
    margin-left: auto;
    display: flex;
    align-items: center;
    padding-right: 9px;
`

const TrayItem = styled.div`
    width: ${p => p.$w}px;
    flex: none;
    display: flex;
    align-items: center;
    justify-content: center;
    font-size: 11px;
    color: #ddd;
    white-space: nowrap;
`
